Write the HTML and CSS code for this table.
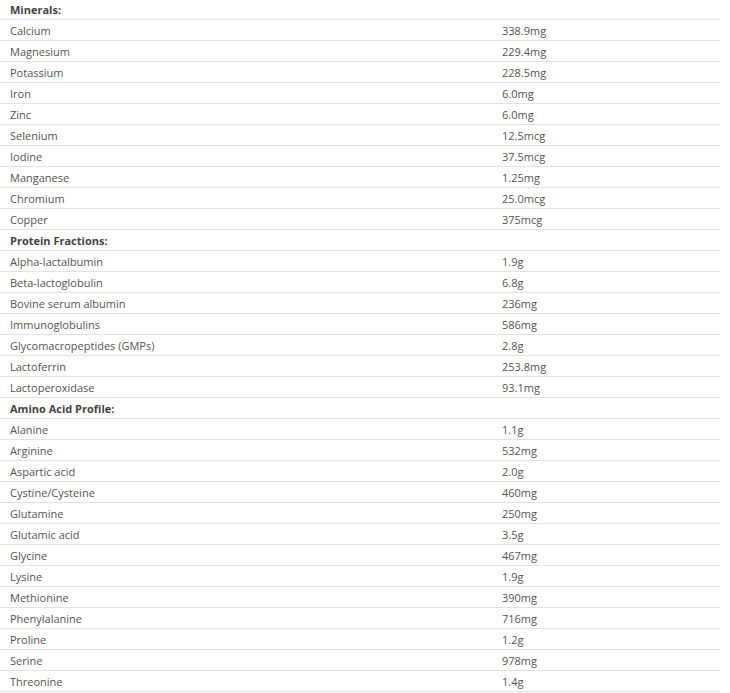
FILE: index.html
```html
<!DOCTYPE html>
<html>
<head>
<meta charset="utf-8">
<link rel="stylesheet" href="styles.css">
</head>
<body>
<div class="facts">
  <div class="row head"><span>Minerals:</span><span></span></div>
  <div class="row"><span>Calcium</span><span>338.9mg</span></div>
  <div class="row"><span>Magnesium</span><span>229.4mg</span></div>
  <div class="row"><span>Potassium</span><span>228.5mg</span></div>
  <div class="row"><span>Iron</span><span>6.0mg</span></div>
  <div class="row"><span>Zinc</span><span>6.0mg</span></div>
  <div class="row"><span>Selenium</span><span>12.5mcg</span></div>
  <div class="row"><span>Iodine</span><span>37.5mcg</span></div>
  <div class="row"><span>Manganese</span><span>1.25mg</span></div>
  <div class="row"><span>Chromium</span><span>25.0mcg</span></div>
  <div class="row"><span>Copper</span><span>375mcg</span></div>
  <div class="row head"><span>Protein Fractions:</span><span></span></div>
  <div class="row"><span>Alpha-lactalbumin</span><span>1.9g</span></div>
  <div class="row"><span>Beta-lactoglobulin</span><span>6.8g</span></div>
  <div class="row"><span>Bovine serum albumin</span><span>236mg</span></div>
  <div class="row"><span>Immunoglobulins</span><span>586mg</span></div>
  <div class="row"><span>Glycomacropeptides (GMPs)</span><span>2.8g</span></div>
  <div class="row"><span>Lactoferrin</span><span>253.8mg</span></div>
  <div class="row"><span>Lactoperoxidase</span><span>93.1mg</span></div>
  <div class="row head"><span>Amino Acid Profile:</span><span></span></div>
  <div class="row"><span>Alanine</span><span>1.1g</span></div>
  <div class="row"><span>Arginine</span><span>532mg</span></div>
  <div class="row"><span>Aspartic acid</span><span>2.0g</span></div>
  <div class="row"><span>Cystine/Cysteine</span><span>460mg</span></div>
  <div class="row"><span>Glutamine</span><span>250mg</span></div>
  <div class="row"><span>Glutamic acid</span><span>3.5g</span></div>
  <div class="row"><span>Glycine</span><span>467mg</span></div>
  <div class="row"><span>Lysine</span><span>1.9g</span></div>
  <div class="row"><span>Methionine</span><span>390mg</span></div>
  <div class="row"><span>Phenylalanine</span><span>716mg</span></div>
  <div class="row"><span>Proline</span><span>1.2g</span></div>
  <div class="row"><span>Serine</span><span>978mg</span></div>
  <div class="row"><span>Threonine</span><span>1.4g</span></div>
</div>
</body>
</html>
```
FILE: styles.css
```css
html, body {
  margin: 0;
  padding: 0;
  background: #fff;
}
.facts {
  width: 720px;
  margin-top: -1px;
  font-family: "Open Sans", "Liberation Sans", sans-serif;
  font-size: 11px;
  color: #555;
}
.row {
  display: grid;
  grid-template-columns: 492px 1fr;
  height: 20px;
  border-bottom: 1px solid #e2e2e2;
}
.row span {
  padding: 2px 0 0 10px;
  line-height: 18px;
}
.row.head {
  font-weight: 700;
  color: #444;
}
```
